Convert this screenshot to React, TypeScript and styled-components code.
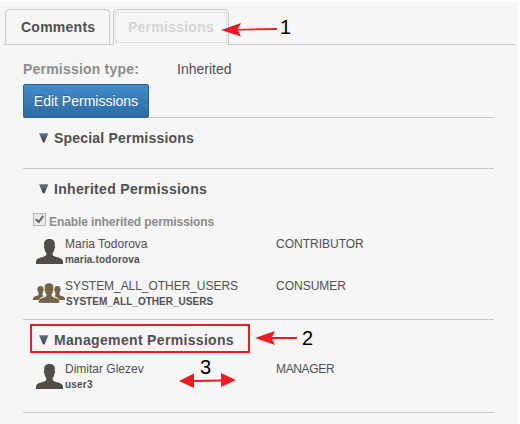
import React from 'react';
import styled, { createGlobalStyle } from 'styled-components';

const Global = createGlobalStyle`
  * { box-sizing: border-box; }
  body { margin: 0; background: #fff; font-family: "Liberation Sans", Arial, sans-serif; color: #505050; }
`;

const Page = styled.main`
  position: relative;
  width: 518px;
  height: 424px;
  border-top: 2px solid #fff;
  background: #f6f6f6;
  overflow: hidden;
  white-space: nowrap;
`;

const TabBar = styled.nav`
  display: flex;
  margin: 7px 3px 0;
  height: 36px;
  padding-left: 2px;
  gap: 3px;
  background: linear-gradient(#c9c9c9, #c9c9c9) left bottom / 100% 1px no-repeat;
`;

const Tab = styled.button<{ $active?: boolean }>`
  width: ${p => (p.$active ? 116 : 105)}px;
  height: ${p => (p.$active ? 36 : 35)}px;
  padding: ${p => (p.$active ? '1px' : '0')};
  border: 1px solid #c9c9c9;
  border-bottom: 0;
  border-radius: 5px 5px 0 0;
  background: #f6f6f6;
  color: ${p => (p.$active ? '#d5d5d5' : '#505050')};
  font: bold 14px/33px "Liberation Sans", Arial, sans-serif;
  text-align: left;
`;

const TabText = styled.span<{ $focused?: boolean }>`
  display: block;
  height: ${p => (p.$focused ? 31 : 33)}px;
  line-height: ${p => (p.$focused ? 29 : 33)}px;
  padding-left: ${p => (p.$focused ? 12 : 15)}px;
  letter-spacing: 0.25px;
  border: ${p => (p.$focused ? '1px dotted #cdcdcd' : '0')};
`;

const Panel = styled.section`
  width: 471px;
  margin-left: 23px;
`;

const TypeLine = styled.div`
  display: grid;
  grid-template-columns: 154px 1fr;
  height: 39px;
  padding-top: 16px;
  font-size: 14px;
  line-height: 16px;
`;

const TypeLabel = styled.strong`
  color: #8c8c8c;
  letter-spacing: 0.2px;
`;

const Actions = styled.div`
  height: 34px;
  background: linear-gradient(#c9c9c9, #c9c9c9) left 33px / 100% 1px no-repeat;
`;

const EditButton = styled.button`
  width: 126px;
  height: 34px;
  padding: 0;
  border: 1px solid #2a6397;
  border-radius: 2px;
  background: linear-gradient(#428bca, #2d6ca2);
  color: #fff;
  font: 14px/32px "Liberation Sans", Arial, sans-serif;
  text-shadow: 0 -1px 0 rgba(0, 0, 0, 0.2);
`;

const Section = styled.section<{ $height: number }>`
  height: ${p => p.$height}px;
  padding-top: 11px;
  border-bottom: 1px solid #c9c9c9;
`;

const Heading = styled.h2<{ $spacing: number }>`
  display: flex;
  align-items: center;
  gap: 5px;
  height: 18px;
  margin: 0 0 0 16px;
  font-size: 14px;
  line-height: 18px;
  letter-spacing: ${p => p.$spacing}px;
`;

const InheritOption = styled.div`
  display: flex;
  align-items: flex-start;
  gap: 3px;
  height: 16px;
  margin: 15px 0 8px 10px;
  color: #8c8c8c;
  font-weight: bold;
  font-size: 12px;
  line-height: 15px;
  letter-spacing: -0.08px;
`;

const OptionText = styled.span`
  padding-top: 2px;
`;

const Members = styled.div<{ $offset?: number }>`
  padding-top: ${p => p.$offset ?? 0}px;
`;

const Member = styled.div`
  display: grid;
  grid-template-columns: 32px 211px 1fr;
  height: 42px;
  padding-left: 10px;
  font-size: 12px;
  line-height: 14px;
`;

const Name = styled.div<{ $spacing?: number }>`
  letter-spacing: ${p => p.$spacing ?? 0}px;
`;

const Account = styled.div<{ $spacing: number; $indent?: number }>`
  padding-left: ${p => p.$indent ?? 0}px;
  font-weight: bold;
  font-size: 10px;
  line-height: 17px;
  letter-spacing: ${p => p.$spacing}px;
`;

const Role = styled.div<{ $spacing?: number }>`
  letter-spacing: ${p => p.$spacing ?? 0}px;
`;

const MemberIcon = styled.div<{ $left?: number; $top: number }>`
  padding-left: ${p => p.$left ?? 0}px;
  padding-top: ${p => p.$top}px;
  line-height: 0;
`;

const Outline = styled.div`
  position: absolute;
  left: 30px;
  top: 322px;
  width: 220px;
  height: 29px;
  border: 2px solid #ed1c24;
`;

const Arrows = styled.svg`
  position: absolute;
  left: 0;
  top: -2px;
`;

const Marker = styled.span<{ $x: number; $y: number }>`
  position: absolute;
  left: ${p => p.$x}px;
  top: ${p => p.$y}px;
  color: #000;
  font-size: 20px;
  line-height: 20px;
`;

const Triangle = () => (
  <svg width="10" height="10" viewBox="0 0 10 10">
    <defs>
      <linearGradient id="tri" x2="0" y2="1">
        <stop stopColor="#69747e" />
        <stop offset="1" stopColor="#35414d" />
      </linearGradient>
    </defs>
    <path d="M0 .3h9.400L5.400 9.500H4z" fill="url(#tri)" />
  </svg>
);

const Person = () => (
  <svg width="28" height="25" viewBox="0 0 28 25">
    <path
      d="M13.500 0c3.300 0 5.400 1.800 5.400 4.800 0 1.100-.1 1.700-.3 2.300.8 0 .8 1.500-.2 3-.3 2.300-1.200 3.400-1.800 4.200 0 2.200.5 2.800 3 3.500 3.800 1.100 7.400 1.800 7.400 5V25H0v-2.200c0-3.200 3.600-3.900 7.400-5 2.500-.7 3-1.300 3-3.500-.6-.8-1.500-1.900-1.800-4.200-1-1.500-1-3-.2-3-.2-.6-.3-1.200-.3-2.300C8.100 1.800 10.200 0 13.500 0z"
      fill="#504d48"
    />
  </svg>
);

const Group = () => (
  <svg width="32" height="20" viewBox="0 0 32 20">
    <path
      fill="#75624b"
      d="M7.500 3c2 0 3.200 1 3.200 3.200 0 1.200-.2 1.700-.5 2.400-.3 1-.7 1.700-.7 3 0 .8.500 1.300 1.600 1.500-2.500 1-4.300 1.600-4.900 3.900H0v-1.400c0-1.500 2-2.200 4-2.800 1.200-.4 1.700-.7 1.700-1.500 0-1.100-.4-1.800-.8-2.700-.4-.7-.5-1.500-.5-2.400C4.400 4 5.600 3 7.500 3z"
    />
    <path
      fill="#75624b"
      d="M24.500 3c-2 0-3.200 1-3.200 3.200 0 1.200.2 1.700.5 2.400.3 1 .7 1.700.7 3 0 .8-.5 1.300-1.600 1.500 2.500 1 4.300 1.600 4.900 3.900H32v-1.400c0-1.500-2-2.200-4-2.800-1.200-.4-1.700-.7-1.700-1.500 0-1.100.4-1.800.8-2.700.4-.7.5-1.500.5-2.400C27.600 4 26.400 3 24.500 3z"
    />
    <path
      fill="#75624b"
      stroke="#f6f6f6"
      strokeWidth=".5"
      d="M16 0c3 0 4.500 1.500 4.500 4 0 1-.1 1.500-.2 2 .7.3.5 1.600-.2 2.500-.3 1.500-.8 2.300-1.400 3 0 1.700.6 2.100 2.300 2.700 2.800.9 5.500 1.400 5.500 4V20.300h-21V18.200c0-2.600 2.700-3.100 5.500-4 1.700-.6 2.300-1 2.300-2.700-.6-.7-1.100-1.500-1.400-3-.7-.9-.9-2.200-.2-2.500-.1-.5-.2-1-.2-2C11.500 1.500 13 0 16 0z"
    />
  </svg>
);

const Check = () => (
  <svg width="13" height="13" viewBox="0 0 13 13">
    <rect x=".5" y=".5" width="12" height="12" fill="#ebebeb" stroke="#b5b5b5" />
    <path d="M2.800 6.200l2.900 2.800L10.200 2.800" fill="none" stroke="#666" strokeWidth="2.100" />
  </svg>
);

export default function App() {
  return (
    <>
      <Global />
      <Page>
        <TabBar>
          <Tab><TabText>Comments</TabText></Tab>
          <Tab $active><TabText $focused>Permissions</TabText></Tab>
        </TabBar>
        <Panel>
          <TypeLine>
            <TypeLabel>Permission type:</TypeLabel>
            <span>Inherited</span>
          </TypeLine>
          <Actions><EditButton>Edit Permissions</EditButton></Actions>
          <Section $height={51}>
            <Heading $spacing={0.2}><Triangle />Special Permissions</Heading>
          </Section>
          <Section $height={151}>
            <Heading $spacing={0.33}><Triangle />Inherited Permissions</Heading>
            <InheritOption><Check /><OptionText>Enable inherited permissions</OptionText></InheritOption>
            <Members>
              <Member>
                <MemberIcon $left={3} $top={2}><Person /></MemberIcon>
                <div>
                  <Name>Maria Todorova</Name>
                  <Account $spacing={0.18}>maria.todorova</Account>
                </div>
                <Role>CONTRIBUTOR</Role>
              </Member>
              <Member>
                <MemberIcon $top={4}><Group /></MemberIcon>
                <div>
                  <Name $spacing={-0.05}>SYSTEM_ALL_OTHER_USERS</Name>
                  <Account $spacing={0.02} $indent={1}>SYSTEM_ALL_OTHER_USERS</Account>
                </div>
                <Role>CONSUMER</Role>
              </Member>
            </Members>
          </Section>
          <Section $height={93}>
            <Heading $spacing={0.33}><Triangle />Management Permissions</Heading>
            <Members $offset={13}>
              <Member>
                <MemberIcon $left={3} $top={2}><Person /></MemberIcon>
                <div>
                  <Name>Dimitar Glezev</Name>
                  <Account $spacing={0.2}>user3</Account>
                </div>
                <Role $spacing={-0.35}>MANAGER</Role>
              </Member>
            </Members>
          </Section>
        </Panel>
        <Outline />
        <Arrows width="518" height="424" fill="#ed1c24">
          <path d="M221 30l20-7-3 6 39-1v2l-39 .5 3 6z" />
          <path d="M255 338l20-7-3 6h25v2h-25l3 6z" />
          <path d="M179 381l15-7.500v6.500l27-.5V373l15 7-15 7v-5.500l-27 .5v6z" />
        </Arrows>
        <Marker $x={280} $y={15}>1</Marker>
        <Marker $x={302} $y={326}>2</Marker>
        <Marker $x={200} $y={355}>3</Marker>
      </Page>
    </>
  );
}
